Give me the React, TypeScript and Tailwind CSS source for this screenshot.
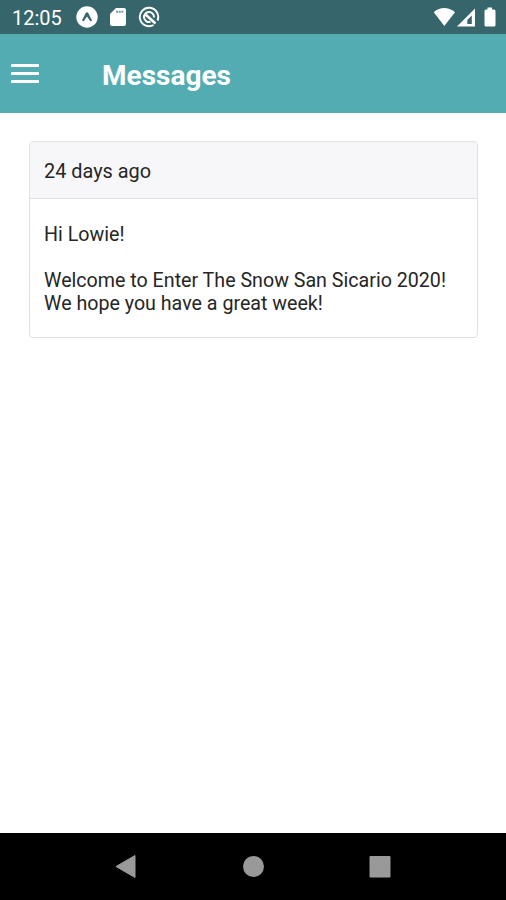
export default function App() {
  return (
    <div className="flex h-[900px] w-[506px] flex-col overflow-hidden bg-white text-[#262626] [font-family:Roboto,sans-serif]">
      <div className="flex h-[34px] shrink-0 items-center bg-[#36666b] pl-3 pr-[9px] text-white">
        <span className="pt-0.5 text-[20px] leading-[34px]">12:05</span>
        <svg className="ml-[14px]" width="22" height="22" viewBox="0 0 22 22">
          <circle cx="11" cy="11" r="10.700" fill="#fff" />
          <path d="M6 14.500 9.600 7.200q1.400-1.800 2.800 0l3.600 7.300q-.8 1.200-1.800.4L11 10.500l-3.200 4.400q-1 .8-1.800-.4z" fill="#36666b" />
        </svg>
        <svg className="ml-[12px]" width="16" height="20" viewBox="0 0 16 20">
          <path d="M6 1h8q2 0 2 2v14q0 2-2 2H2q-2 0-2-2V7z" fill="#fff" />
          <path d="M6 4.700h8" stroke="#36666b" strokeWidth="2" strokeDasharray="2 .7" opacity=".65" />
        </svg>
        <svg className="ml-[12px]" width="22" height="22" viewBox="0 0 22 22" fill="none" stroke="#fff" strokeWidth="2">
          <path d="M15.500 19A9.200 9.200 0 1 1 19.500 14.500" />
          <path d="M12.500 15.800A5 5 0 1 1 16 11.500" />
          <path d="m7.500 8.500 10 9" strokeWidth="2.500" />
        </svg>
        <svg className="ml-auto" width="64" height="22" viewBox="0 0 64 22" fill="#fff">
          <path d="M.8 6.200Q11-2 22 6.200L11.300 20z" />
          <path fillRule="evenodd" d="M42 2.500V20.500H24zM38.800 9.500v8.500h-4.500v-4z" />
          <path d="M54.500 1.500h4.500v2h2q1.500 0 1.500 1.500v14q0 1.500-1.500 1.500h-8q-1.500 0-1.500-1.500V5q0-1.500 1.500-1.500h1.500z" />
        </svg>
      </div>
      <header className="flex h-[79px] shrink-0 items-center bg-[#54acb3] text-white">
        <div className="ml-[11px] flex w-[28px] flex-col gap-[5px]">
          <i className="h-[3px] rounded-[1px] bg-white" /><i className="h-[3px] rounded-[1px] bg-white" /><i className="h-[3px] rounded-[1px] bg-white" />
        </div>
        <h1 className="ml-[63px] mt-1 text-[28px] font-bold leading-8">Messages</h1>
      </header>
      <main className="flex-1 pl-[29px] pr-[28px] pt-[28px]">
        <article className="h-[197px] overflow-hidden rounded-[4px] border border-[#e0e0e0]">
          <div className="h-[57px] border-b border-[#dfdfdf] bg-[#f7f7fa] pl-[14px] text-[19.900px] leading-[60px]">24 days ago</div>
          <div className="whitespace-nowrap pl-[14px] pt-[24px] text-[19.650px] leading-[23px]">
            <p>Hi Lowie!</p>
            <p className="mt-[23px]">Welcome to Enter The Snow San Sicario 2020!</p>
            <p>We hope you have a great week!</p>
          </div>
        </article>
      </main>
      <nav className="flex h-[67px] shrink-0 bg-black">
        <svg width="506" height="67" fill="#999">
          <path d="M116 33.500 135 22.500v22z" stroke="#999" strokeLinejoin="round" /><circle cx="253.5" cy="33.5" r="10.5" /><rect x="369.500" y="23" width="21" height="21.500" rx="1" />
        </svg>
      </nav>
    </div>
  );
}
